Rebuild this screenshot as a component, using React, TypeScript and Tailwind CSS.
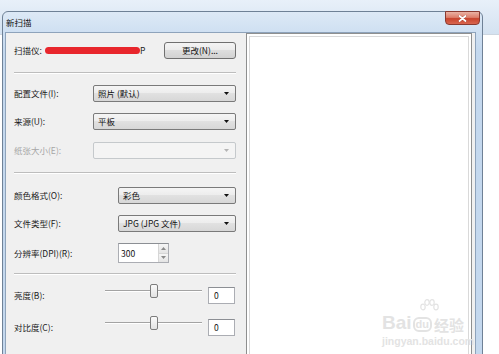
import React from "react";

function Arrow({ color = "#000" }: { color?: string }) {
  return (
    <svg width="5" height="3" viewBox="0 0 5 3" className="shrink-0">
      <path d="M0 0H5L2.5 3Z" fill={color} />
    </svg>
  );
}

function Combo({ text, disabled }: { text?: string; disabled?: boolean }) {
  return (
    <div
      className={
        disabled
          ? "flex h-[17px] flex-1 items-center rounded-[2px] border border-[#c5c9cc] bg-[#f4f4f4] pl-[4px] pr-[6px]"
          : "flex h-[17px] flex-1 items-center rounded-[2px] border border-[#7a7a7a] bg-[linear-gradient(#f5f5f5,#ececec_50%,#e1e1e1_50%,#d7d7d7)] pl-[4px] pr-[6px]"
      }
    >
      <span className="flex-1 leading-none text-[#111]">{text}</span>
      <Arrow color={disabled ? "#b4b4b4" : "#111"} />
    </div>
  );
}

function Sep() {
  return <div className="h-[2px] border-t border-b border-t-[#bdbdbd] border-b-white" />;
}

function Slider() {
  return (
    <div className="relative mb-[9px] h-[14px] w-[97px] shrink-0">
      <div className="absolute left-0 right-0 top-[6px] h-[2px] border-t border-b border-t-[#a3a3a3] border-b-white" />
      <div className="absolute left-[45px] top-0 h-[14px] w-[8px] rounded-[2px] border border-[#7d7d7d] bg-[linear-gradient(#fafafa,#e2e2e2)]" />
    </div>
  );
}

function ValueBox() {
  return (
    <div className="ml-[6px] flex h-[17px] w-[27px] shrink-0 items-center border border-[#abadb3] border-t-[#8c8f94] bg-white pl-[5px] leading-none text-[#111]">
      0
    </div>
  );
}

function Label({ w, children, disabled }: { w: string; children: React.ReactNode; disabled?: boolean }) {
  return (
    <div className={`${w} shrink-0 leading-none ${disabled ? "text-[#a6a6a6]" : "text-[#1a1a1a]"}`}>
      {children}
    </div>
  );
}

export default function App() {
  return (
    <div className="relative h-[354px] w-[499px] overflow-hidden bg-white font-['Noto_Sans_CJK_SC',sans-serif] text-[8.5px]">
      <div className="h-[35px] border-b border-[#cdd6e0] bg-[linear-gradient(#e8f0f9,#d4e2f1)]" />

      <div className="absolute left-[2px] top-[11px] flex h-[360px] w-[481px] flex-col rounded-t-[6px] border border-[#6f8196] bg-[linear-gradient(#dde9f6,#cfe0f2_20px,#c4d8ee_40px,#c4d8ee)]">
        <div className="flex h-[20px] shrink-0 items-center pl-[3px] leading-none text-[#111]">新扫描</div>

        <div className="absolute right-[2px] top-[-1px] flex h-[14px] w-[35px] items-center justify-center rounded-b-[4px] border border-[#8a3a30] bg-[linear-gradient(#eab2a4,#dd7f6b_45%,#c8442d_55%,#d9664f)]">
          <svg width="9" height="7" viewBox="0 0 9 7">
            <path d="M1.5 1L7.5 6M7.5 1L1.5 6" stroke="#5a1a12" strokeWidth="2.6" strokeLinecap="round" opacity="0.35" />
            <path d="M1.5 1L7.5 6M7.5 1L1.5 6" stroke="#fff" strokeWidth="1.7" strokeLinecap="round" />
          </svg>
        </div>

        <div className="flex flex-1 pl-[2px] pr-[6px]">
          <div className="flex flex-1 border-l border-r border-t border-[#8ea3bb] bg-[#f0f0f0]">
            {/* left panel */}
            <div className="flex w-[240px] shrink-0 flex-col pl-[8px] pr-[10px] pt-[9px]">
              <div className="flex h-[17px] items-center">
                <span className="leading-none text-[#1a1a1a]">扫描仪:</span>
                <div className="ml-[3px] h-[7px] w-[95px] rounded-full bg-[#e8262c] blur-[0.6px]" />
                <span className="leading-none text-[#1a1a1a]">P</span>
                <div className="ml-auto flex h-[17px] w-[72px] items-center justify-center rounded-[3px] border border-[#707070] bg-[linear-gradient(#f4f4f4,#ebebeb_50%,#dedede_50%,#d2d2d2)] leading-none text-[#111]">
                  更改(N)...
                </div>
              </div>

              <div className="mt-[13px]">
                <Sep />
              </div>

              <div className="mt-[11px] flex h-[17px] items-center">
                <Label w="w-[79px]">配置文件(I):</Label>
                <Combo text="照片 (默认)" />
              </div>
              <div className="mt-[11px] flex h-[17px] items-center">
                <Label w="w-[79px]">来源(U):</Label>
                <Combo text="平板" />
              </div>
              <div className="mt-[12px] flex h-[17px] items-center">
                <Label w="w-[79px]" disabled>
                  纸张大小(E):
                </Label>
                <Combo disabled />
              </div>

              <div className="mt-[13px]">
                <Sep />
              </div>

              <div className="mt-[13px] flex h-[17px] items-center">
                <Label w="w-[104px]">颜色格式(O):</Label>
                <Combo text="彩色" />
              </div>
              <div className="mt-[11px] flex h-[17px] items-center">
                <Label w="w-[104px]">文件类型(F):</Label>
                <Combo text="JPG (JPG 文件)" />
              </div>
              <div className="mt-[11px] flex h-[20px] items-center">
                <Label w="w-[104px]">分辨率(DPI)(R):</Label>
                <div className="flex h-[20px] w-[51px] border border-[#abadb3] border-t-[#8c8f94] bg-white">
                  <div className="flex flex-1 items-center pl-[2px] leading-none text-[#111]">300</div>
                  <div className="flex w-[10px] flex-col border-l border-[#d6d6d6]">
                    <div className="flex flex-1 items-center justify-center border-b border-[#d6d6d6] bg-[linear-gradient(#f6f6f6,#e4e4e4)]">
                      <svg width="5" height="3" viewBox="0 0 5 3">
                        <path d="M0 3H5L2.5 0Z" fill="#8a8a8a" />
                      </svg>
                    </div>
                    <div className="flex flex-1 items-center justify-center bg-[linear-gradient(#f6f6f6,#e4e4e4)]">
                      <svg width="5" height="3" viewBox="0 0 5 3">
                        <path d="M0 0H5L2.5 3Z" fill="#8a8a8a" />
                      </svg>
                    </div>
                  </div>
                </div>
              </div>

              <div className="mt-[10px]">
                <Sep />
              </div>

              <div className="mt-[12px] flex h-[17px] items-center">
                <Label w="w-[91px]">亮度(B):</Label>
                <Slider />
                <ValueBox />
              </div>
              <div className="mt-[15px] flex h-[17px] items-center">
                <Label w="w-[91px]">对比度(C):</Label>
                <Slider />
                <ValueBox />
              </div>
            </div>

            {/* preview */}
            <div className="relative w-[226px] shrink-0 border border-[#8e8f8f] bg-white p-[2px]">
              <div className="h-full border border-[#d9d9d9] bg-white" />
              <div className="absolute left-[135px] top-[265px] flex flex-col text-[#e3e3e3]">
                <svg width="20" height="14" viewBox="0 0 20 14" className="ml-[37px]">
                  <ellipse cx="4" cy="8" rx="2.2" ry="2.8" fill="none" stroke="#e3e3e3" strokeWidth="1.2" />
                  <ellipse cx="8" cy="3.5" rx="2.2" ry="2.8" fill="none" stroke="#e3e3e3" strokeWidth="1.2" />
                  <ellipse cx="13" cy="3.5" rx="2.2" ry="2.8" fill="none" stroke="#e3e3e3" strokeWidth="1.2" />
                  <ellipse cx="17" cy="8" rx="2.2" ry="2.8" fill="none" stroke="#e3e3e3" strokeWidth="1.2" />
                </svg>
                <div className="flex items-end">
                  <span className="font-['Liberation_Sans',sans-serif] text-[19px] font-bold leading-none">Bai</span>
                  <span className="ml-[1px] rounded-[6px] border-2 border-[#e3e3e3] px-[1px] font-['Liberation_Sans',sans-serif] text-[11px] font-bold leading-none">
                    du
                  </span>
                  <span className="ml-[2px] text-[15px] font-bold leading-none">经验</span>
                </div>
                <div className="mt-[4px] font-['Liberation_Sans',sans-serif] text-[10.5px] font-bold leading-none">
                  jingyan.baidu.com
                </div>
              </div>
            </div>
          </div>
        </div>
      </div>
    </div>
  );
}
